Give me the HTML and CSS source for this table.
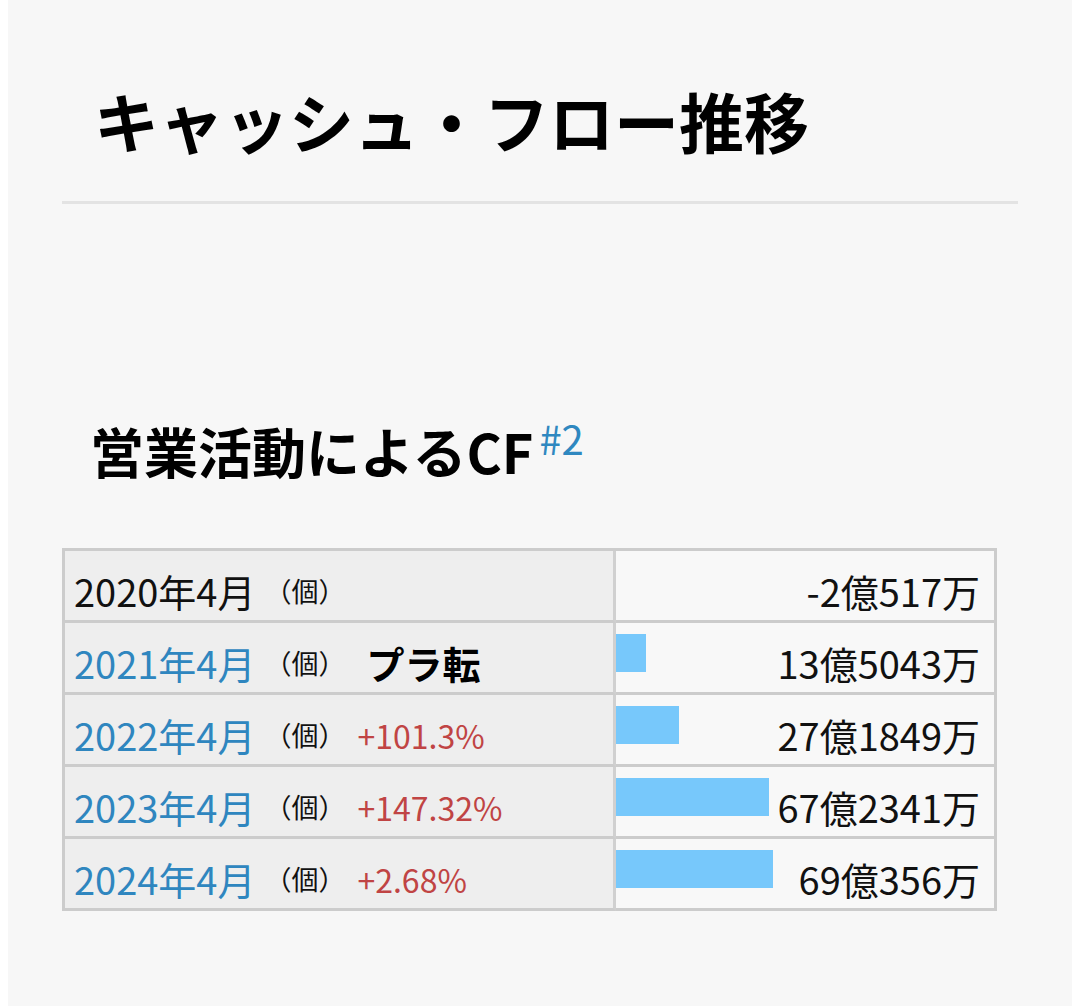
FILE: index.html
```html
<!DOCTYPE html>
<html lang="ja">
<head>
<meta charset="utf-8">
<title>キャッシュ・フロー推移</title>
<link rel="stylesheet" href="styles.css">
</head>
<body>
<div class="panel">
  <header class="page-head">
    <h1 class="title">キャッシュ・フロー推移</h1>
  </header>
  <h2 class="subtitle">営業活動によるCF<sup class="note">#2</sup></h2>
  <table class="cf-table">
    <tbody>
      <tr>
        <td class="label-cell"><div class="label"><span class="date plain">2020年4月</span><span class="unit">（個）</span></div></td>
        <td class="value-cell"><div class="value-wrap"><span class="value">-2億517万</span></div></td>
      </tr>
      <tr>
        <td class="label-cell"><div class="label"><span class="date">2021年4月</span><span class="unit">（個）</span><span class="tag">プラ転</span></div></td>
        <td class="value-cell"><div class="value-wrap"><span class="bar" style="width:30px"></span><span class="value">13億5043万</span></div></td>
      </tr>
      <tr>
        <td class="label-cell"><div class="label"><span class="date">2022年4月</span><span class="unit">（個）</span><span class="pct">+101.3%</span></div></td>
        <td class="value-cell"><div class="value-wrap"><span class="bar" style="width:63px"></span><span class="value">27億1849万</span></div></td>
      </tr>
      <tr>
        <td class="label-cell"><div class="label"><span class="date">2023年4月</span><span class="unit">（個）</span><span class="pct">+147.32%</span></div></td>
        <td class="value-cell"><div class="value-wrap"><span class="bar" style="width:153px"></span><span class="value">67億2341万</span></div></td>
      </tr>
      <tr>
        <td class="label-cell"><div class="label"><span class="date">2024年4月</span><span class="unit">（個）</span><span class="pct">+2.68%</span></div></td>
        <td class="value-cell"><div class="value-wrap"><span class="bar" style="width:157px"></span><span class="value">69億356万</span></div></td>
      </tr>
    </tbody>
  </table>
</div>
</body>
</html>
```

FILE: styles.css
```css
html, body {
  margin: 0;
  padding: 0;
  background: #ffffff;
}
body {
  padding: 0 8px;
  font-family: "Noto Sans CJK JP", "Noto Sans", sans-serif;
  color: #111;
}
.panel {
  background: #f7f7f7;
  min-height: 1006px;
  padding: 0 54px;
  box-sizing: border-box;
  overflow: hidden;
}
.page-head {
  border-bottom: 3px solid #e3e3e3;
  padding: 88px 0 48px 32px;
}
.title {
  margin: 0;
  font-size: 65px;
  line-height: 65px;
  font-weight: 700;
  color: #000;
}
.subtitle {
  margin: 220px 0 0 28px;
  font-size: 54px;
  line-height: 54px;
  font-weight: 700;
  color: #000;
}
.note {
  font-size: 40px;
  line-height: 1;
  font-weight: 400;
  color: #2f88c0;
  vertical-align: top;
  position: relative;
  top: -6px;
  margin-left: 6px;
}
.cf-table {
  margin-top: 70px;
  width: 935px;
  border-collapse: separate;
  border-spacing: 0;
  border: 3px solid #cccccc;
  border-bottom: none;
}
.cf-table td {
  padding: 0;
  border-bottom: 3px solid #cccccc;
  vertical-align: top;
}
.label-cell {
  width: 548px;
  background: #eeeeee;
  border-right: 3px solid #d0d0d0;
}
.value-cell {
  background: #f8f8f8;
}
.label {
  height: 69px;
  box-sizing: border-box;
  padding: 10px 0 0 9px;
  display: flex;
  align-items: center;
  white-space: nowrap;
}
.date {
  font-size: 38px;
  line-height: 44px;
  color: #2f86bf;
}
.date.plain {
  color: #111;
}
.unit {
  font-size: 27px;
  line-height: 44px;
  margin-left: 9px;
  color: #111;
}
.tag {
  font-size: 38px;
  line-height: 44px;
  font-weight: 700;
  margin-left: 21px;
  color: #000;
}
.pct {
  font-size: 32px;
  line-height: 44px;
  margin-left: 12px;
  color: #c04444;
}
.value-wrap {
  height: 69px;
  box-sizing: border-box;
  padding: 10px 14px 0 0;
  display: flex;
  align-items: center;
}
.bar {
  display: block;
  align-self: flex-start;
  margin-top: 1px;
  height: 38px;
  background: #77c8fb;
  flex: none;
}
.value {
  margin-left: auto;
  font-size: 38px;
  line-height: 44px;
  color: #111;
  white-space: nowrap;
}
```
